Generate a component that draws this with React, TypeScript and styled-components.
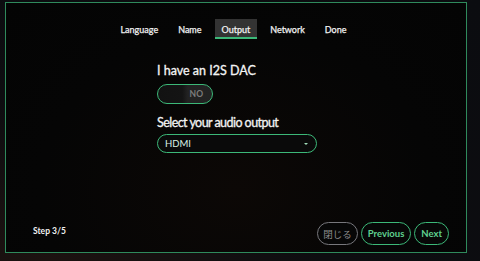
import React from "react";
import styled, { createGlobalStyle } from "styled-components";

const Global = createGlobalStyle`
  html, body { margin: 0; padding: 0; }
  body {
    width: 480px;
    height: 261px;
    overflow: hidden;
    background: radial-gradient(ellipse at 10% 100%, #1c1210 0%, #0d0d10 45%, #0b0c10 100%);
    font-family: Lato, "Noto Sans CJK JP", sans-serif;
  }
  #root { height: 261px; }
`;

const Modal = styled.div`
  box-sizing: border-box;
  margin: 2px 13px 0 5px;
  width: 462px;
  height: 251px;
  border: 1px solid #2f8a5c;
  background: radial-gradient(ellipse at 50% 75%, #0c0806 0%, #050505 60%, #040404 100%);
  display: flex;
  flex-direction: column;
  padding: 16px 17px 7px 27px;
`;

const Tabs = styled.div`
  display: flex;
  justify-content: center;
  gap: 6px;
  padding-right: 15px;
`;

const Tab = styled.div<{ $active?: boolean }>`
  height: 20px;
  padding: 2px 7px 0;
  display: flex;
  align-items: center;
  font-size: 9px;
  font-weight: 400;
  -webkit-text-stroke: 0.25px #f2f2f2;
  color: #f2f2f2;
  box-sizing: border-box;
  background: ${(p) => (p.$active ? "#333333" : "transparent")};
  border-bottom: 2px solid ${(p) => (p.$active ? "#3cb878" : "transparent")};
`;

const Form = styled.div`
  width: 160px;
  margin: 24px 0 0 124px;
  display: flex;
  flex-direction: column;
`;

const Label = styled.div<{ $top?: number; $tight?: boolean }>`
  font-size: 12.5px;
  font-weight: 400;
  -webkit-text-stroke: 0.3px #f4f4f4;
  color: #f4f4f4;
  line-height: 15px;
  letter-spacing: ${(p) => (p.$tight ? "-0.55px" : "0")};
  margin-top: ${(p) => p.$top ?? 0}px;
`;

const Toggle = styled.div`
  box-sizing: border-box;
  margin-top: 6px;
  width: 56px;
  height: 20px;
  border: 1.5px solid #3cb878;
  border-radius: 10px;
  background: linear-gradient(90deg, #121212 0%, #141414 45%, #222222 55%, #232323 100%);
  display: flex;
  align-items: center;
  justify-content: flex-end;
  padding-right: 9px;
  font-size: 8.5px;
  font-weight: 700;
  color: #7c7c7c;
`;

const Select = styled.div`
  box-sizing: border-box;
  margin-top: 4px;
  width: 160px;
  height: 19px;
  border: 1.5px solid #3cb878;
  border-radius: 9.5px;
  background: #0a0a0a;
  display: flex;
  align-items: center;
  justify-content: space-between;
  padding: 0 8px 0 7px;
  font-size: 9.5px;
  font-weight: 400;
  color: #dcf2e4;
`;

const Caret = styled.span`
  width: 0;
  height: 0;
  border-left: 2.5px solid transparent;
  border-right: 2.5px solid transparent;
  border-top: 2.5px solid #9fdcb8;
`;

const Footer = styled.div`
  margin-top: auto;
  display: flex;
  align-items: center;
  justify-content: space-between;
`;

const Step = styled.div`
  font-size: 8.5px;
  font-weight: 700;
  color: #f2f2f2;
  margin-top: -6px;
`;

const Buttons = styled.div`
  display: flex;
  gap: 3px;
`;

const Button = styled.button<{ $muted?: boolean }>`
  box-sizing: border-box;
  height: 23px;
  padding: 0 6px;
  border-radius: 11.5px;
  border: 1.5px solid ${(p) => (p.$muted ? "#77777c" : "#3cb878")};
  background: #070707;
  color: ${(p) => (p.$muted ? "#8c8c8c" : "#5fd08f")};
  font-family: Lato, "Noto Sans CJK JP", sans-serif;
  font-size: 9.5px;
  font-weight: 700;
  white-space: nowrap;
  display: flex;
  align-items: center;
  cursor: pointer;
`;

const CloseButton = styled(Button)`
  font-weight: 400;
  font-size: 9.5px;
  padding: 0 5px;
`;

export default function App() {
  return (
    <>
      <Global />
      <Modal>
        <Tabs>
          <Tab>Language</Tab>
          <Tab>Name</Tab>
          <Tab $active>Output</Tab>
          <Tab>Network</Tab>
          <Tab>Done</Tab>
        </Tabs>
        <Form>
          <Label>I have an I2S DAC</Label>
          <Toggle>NO</Toggle>
          <Label $top={11} $tight>
            Select your audio output
          </Label>
          <Select>
            <span>HDMI</span>
            <Caret />
          </Select>
        </Form>
        <Footer>
          <Step>Step 3/5</Step>
          <Buttons>
            <CloseButton $muted>閉じる</CloseButton>
            <Button>Previous</Button>
            <Button>Next</Button>
          </Buttons>
        </Footer>
      </Modal>
    </>
  );
}
